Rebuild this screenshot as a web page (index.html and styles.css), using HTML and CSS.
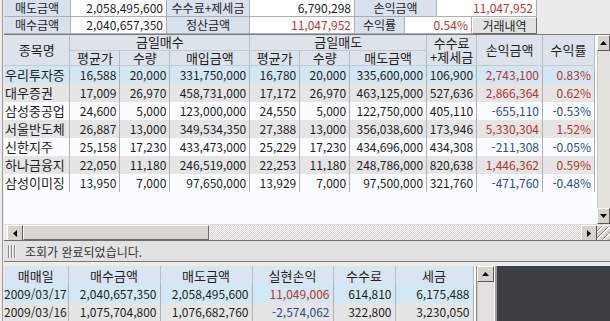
FILE: index.html
```html
<!DOCTYPE html>
<html lang="ko">
<head>
    <meta charset="UTF-8">
    <title>당일 매매 손익</title>
    <link rel="stylesheet" href="styles.css">
</head>
<body>
    <div class="app">
        <div class="summary">
            <div class="sum-row">
                <span class="lbl w67">매도금액</span>
                <span class="val w96">2,058,495,600</span>
                <span class="lbl w83">수수료+제세금</span>
                <span class="val w105">6,790,298</span>
                <span class="lbl w82">손익금액</span>
                <span class="val w100 up">11,047,952</span>
            </div>
            <div class="sum-row">
                <span class="lbl w67">매수금액</span>
                <span class="val w96">2,040,657,350</span>
                <span class="lbl w83">정산금액</span>
                <span class="val w105 up">11,047,952</span>
                <span class="lbl w50">수익률</span>
                <span class="val w67 up">0.54%</span>
                <button class="btn">거래내역</button>
            </div>
        </div>

        <div class="panel">
            <div class="panel-body">
                <div class="grid-view">
                    <table class="grid">
                        <colgroup>
                            <col class="c66"><col class="c50"><col class="c50"><col class="c80"><col class="c50">
                            <col class="c50"><col class="c77"><col class="c50"><col class="c66"><col class="c52">
                        </colgroup>
                        <thead>
                            <tr>
                                <th rowspan="2">종목명</th>
                                <th colspan="3">금일매수</th>
                                <th colspan="3">금일매도</th>
                                <th rowspan="2" class="two">수수료<br>+제세금</th>
                                <th rowspan="2">손익금액</th>
                                <th rowspan="2">수익률</th>
                            </tr>
                            <tr>
                                <th>평균가</th><th>수량</th><th>매입금액</th>
                                <th>평균가</th><th>수량</th><th>매도금액</th>
                            </tr>
                        </thead>
                        <tbody id="rows"></tbody>
                    </table>
                </div>
                <div class="vscroll">
                    <span class="arrow"><svg width="7" height="4" viewBox="0 0 7 4"><path d="M3.5 0L7 4H0z"/></svg></span>
                    <span class="track"></span>
                    <span class="arrow"><svg width="7" height="4" viewBox="0 0 7 4"><path d="M0 0h7L3.5 4z"/></svg></span>
                </div>
            </div>
            <div class="hscroll">
                <span class="arrow"><svg width="4" height="7" viewBox="0 0 4 7"><path d="M0 3.5L4 0v7z"/></svg></span>
                <span class="thumb"></span>
                <span class="hatch"></span>
                <span class="arrow"><svg width="4" height="7" viewBox="0 0 4 7"><path d="M0 0l4 3.5L0 7z"/></svg></span>
                <span class="grip"></span>
            </div>
        </div>

        <div class="status">
            <span class="status-grip"></span>
            <span>조회가 완료되었습니다.</span>
        </div>

        <div class="bottom">
            <div class="daily">
                <table class="grid daily-grid">
                    <colgroup>
                        <col class="c64"><col class="c92"><col class="c92"><col class="c81"><col class="c62"><col class="c78">
                    </colgroup>
                    <thead>
                        <tr><th>매매일</th><th>매수금액</th><th>매도금액</th><th>실현손익</th><th>수수료</th><th>세금</th></tr>
                    </thead>
                    <tbody>
                        <tr class="sel">
                            <td class="date">2009/03/17</td><td>2,040,657,350</td><td>2,058,495,600</td>
                            <td class="up">11,049,006</td><td>614,810</td><td>6,175,488</td>
                        </tr>
                        <tr class="alt">
                            <td class="date">2009/03/16</td><td>1,075,704,800</td><td>1,076,682,760</td>
                            <td class="down">-2,574,062</td><td>322,800</td><td>3,230,050</td>
                        </tr>
                    </tbody>
                </table>
                <div class="vscroll small">
                    <span class="arrow"><svg width="7" height="4" viewBox="0 0 7 4"><path d="M3.5 0L7 4H0z"/></svg></span>
                    <span class="track"></span>
                </div>
            </div>
            <div class="dark"></div>
        </div>
    </div>

    <script>
        // 종목별 당일 매매 내역
        const trades = [
            ['우리투자증', '16,588', '20,000', '331,750,000', '16,780', '20,000', '335,600,000', '106,900', '2,743,100', '0.83%'],
            ['대우증권', '17,009', '26,970', '458,731,000', '17,172', '26,970', '463,125,000', '527,636', '2,866,364', '0.62%'],
            ['삼성중공업', '24,600', '5,000', '123,000,000', '24,550', '5,000', '122,750,000', '405,110', '-655,110', '-0.53%'],
            ['서울반도체', '26,887', '13,000', '349,534,350', '27,388', '13,000', '356,038,600', '173,946', '5,330,304', '1.52%'],
            ['신한지주', '25,158', '17,230', '433,473,000', '25,229', '17,230', '434,696,000', '434,308', '-211,308', '-0.05%'],
            ['하나금융지', '22,050', '11,180', '246,519,000', '22,253', '11,180', '248,786,000', '820,638', '1,446,362', '0.59%'],
            ['삼성이미징', '13,950', '7,000', '97,650,000', '13,929', '7,000', '97,500,000', '321,760', '-471,760', '-0.48%']
        ];

        function renderRows() {
            const body = document.getElementById('rows');
            let html = '';
            trades.forEach((t, i) => {
                const rowClass = i === 0 ? 'sel' : (i % 2 === 1 ? 'alt' : '');
                const sign = t[8].startsWith('-') ? 'down' : 'up';
                html += `<tr class="${rowClass}">
                    <td class="name">${t[0]}</td>
                    ${t.slice(1, 8).map(v => `<td>${v}</td>`).join('')}
                    <td class="${sign}">${t[8]}</td>
                    <td class="${sign}">${t[9]}</td>
                </tr>`;
            });
            body.innerHTML = html;
        }

        document.addEventListener('DOMContentLoaded', renderRows);
    </script>
</body>
</html>
```

FILE: styles.css
```css
* {
    margin: 0;
    padding: 0;
    box-sizing: border-box;
}

body {
    width: 610px;
    height: 321px;
    overflow: hidden;
    background: #ececec;
    font-family: "Noto Sans CJK KR", "Noto Sans", sans-serif;
    font-size: 12px;
    color: #1e1e1e;
}

.app {
    display: flex;
    flex-direction: column;
    width: 608px;
    margin-left: 2px;
    border-left: 1px solid #9c9c9c;
    padding-left: 1px;
}

.up { color: #b8342c; }
.down { color: #2b4c8e; }

/* 상단 요약 */
.sum-row {
    display: flex;
    height: 17px;
}

.sum-row > span {
    border-right: 1px solid #a8b0ba;
    border-bottom: 1px solid #a8b0ba;
    line-height: 16px;
    white-space: nowrap;
}

.lbl {
    background: #d8e1ec;
    text-align: center;
}

.val {
    background: #fff;
    text-align: right;
    padding-right: 3px;
}

.w50 { width: 50px; }
.w67 { width: 67px; }
.w82 { width: 82px; }
.w83 { width: 83px; }
.w96 { width: 96px; }
.w100 { width: 100px; }
.w105 { width: 105px; }

.btn {
    width: 65px;
    height: 17px;
    font: inherit;
    line-height: 14px;
    color: #1e1e1e;
    background: #e2e2e2;
    border: 1px solid;
    border-color: #fff #6a6a6a #6a6a6a #fff;
}

/* 종목 그리드 */
.panel {
    border-top: 1px solid #7a7a7a;
    background: #fbfcfe;
}

.panel-body {
    display: flex;
    height: 189px;
}

.grid-view {
    width: 593px;
}

.grid {
    table-layout: fixed;
    border-collapse: collapse;
}

.grid th {
    height: 15px;
    background: #dde3eb;
    border-right: 1px solid #b5bcc6;
    border-bottom: 1px solid #c4cad3;
    font-weight: normal;
    font-size: 13px;
    line-height: 14px;
    text-align: center;
    white-space: nowrap;
}

.grid th.two {
    line-height: 14px;
}

.grid td {
    height: 18px;
    border-right: 1px solid #b0b0b0;
    padding-right: 3px;
    text-align: right;
    line-height: 18px;
    white-space: nowrap;
    overflow: hidden;
}

.grid td.name {
    font-size: 13px;
    text-align: left;
    padding: 0 0 0 1px;
}

.grid tr.sel td { background: #d2e6f3; }
.grid tr.alt td { background: #e5e5e5; }

.c50 { width: 50px; }
.c52 { width: 52px; }
.c62 { width: 62px; }
.c64 { width: 64px; }
.c66 { width: 66px; }
.c77 { width: 77px; }
.c78 { width: 78px; }
.c80 { width: 80px; }
.c81 { width: 81px; }
.c92 { width: 92px; }

/* 스크롤바 */
.vscroll {
    display: flex;
    flex-direction: column;
    width: 13px;
    margin-left: 2px;
}

.vscroll .track {
    flex: 1;
    background: #e3e2df;
    border-left: 1px solid #c8c8c8;
}

.arrow {
    display: flex;
    align-items: center;
    justify-content: center;
    flex: none;
    width: 16px;
    height: 16px;
    background: #d6d3cc;
    border: 1px solid;
    border-color: #fff #5a5a5a #5a5a5a #fff;
}

.vscroll .arrow {
    width: 13px;
}

.hscroll {
    display: flex;
    height: 16px;
    padding-left: 3px;
    background: #ececec;
    border-top: 1px solid #dcdcdc;
}

.hscroll .thumb {
    width: 186px;
    background: #d8d5ce;
    border: 1px solid;
    border-color: #fff #6a6a6a #6a6a6a #fff;
}

.hatch {
    flex: 1;
    background-color: #fff;
    background-image: repeating-conic-gradient(#d4d1ca 0 25%, #fafafa 0 50%);
    background-size: 2px 2px;
}

.grip {
    width: 13px;
    background: #d6d3cc repeating-linear-gradient(135deg, transparent 0 3px, #8a8a8a 3px 4px, #fff 4px 5px);
    border-top: 1px solid #fff;
}

/* 상태 표시줄 */
.status {
    display: flex;
    align-items: center;
    gap: 9px;
    height: 22px;
    padding-left: 4px;
    background: #e2e2e2;
    border-top: 1px solid #6e6e6e;
    border-bottom: 1px solid #7a7a7a;
    color: #333;
}

.status-grip {
    width: 8px;
    height: 13px;
    background: repeating-linear-gradient(90deg, #8c8c8c 0 1px, #f4f4f4 1px 2px, transparent 2px 3px);
}

/* 일자별 내역 */
.bottom {
    display: flex;
    height: 55px;
    margin-top: 4px;
}

.daily {
    display: flex;
    width: 491px;
    background: #fbfcfe;
}

.daily-grid th {
    height: 19px;
    font-size: 13px;
    background: #d9e5f2;
    border-bottom: none;
}

.daily-grid td.date {
    text-align: left;
    padding: 0;
}

.daily-grid tr.sel td { background: #d3e8f5; }

.vscroll.small {
    width: 18px;
    margin-left: 2px;
    border-left: 1px solid #8a8a8a;
}

.vscroll.small .arrow {
    width: 17px;
}

.dark {
    flex: 1;
    background: #3c3f44;
    border-left: 2px solid #9a9a9a;
}
```
